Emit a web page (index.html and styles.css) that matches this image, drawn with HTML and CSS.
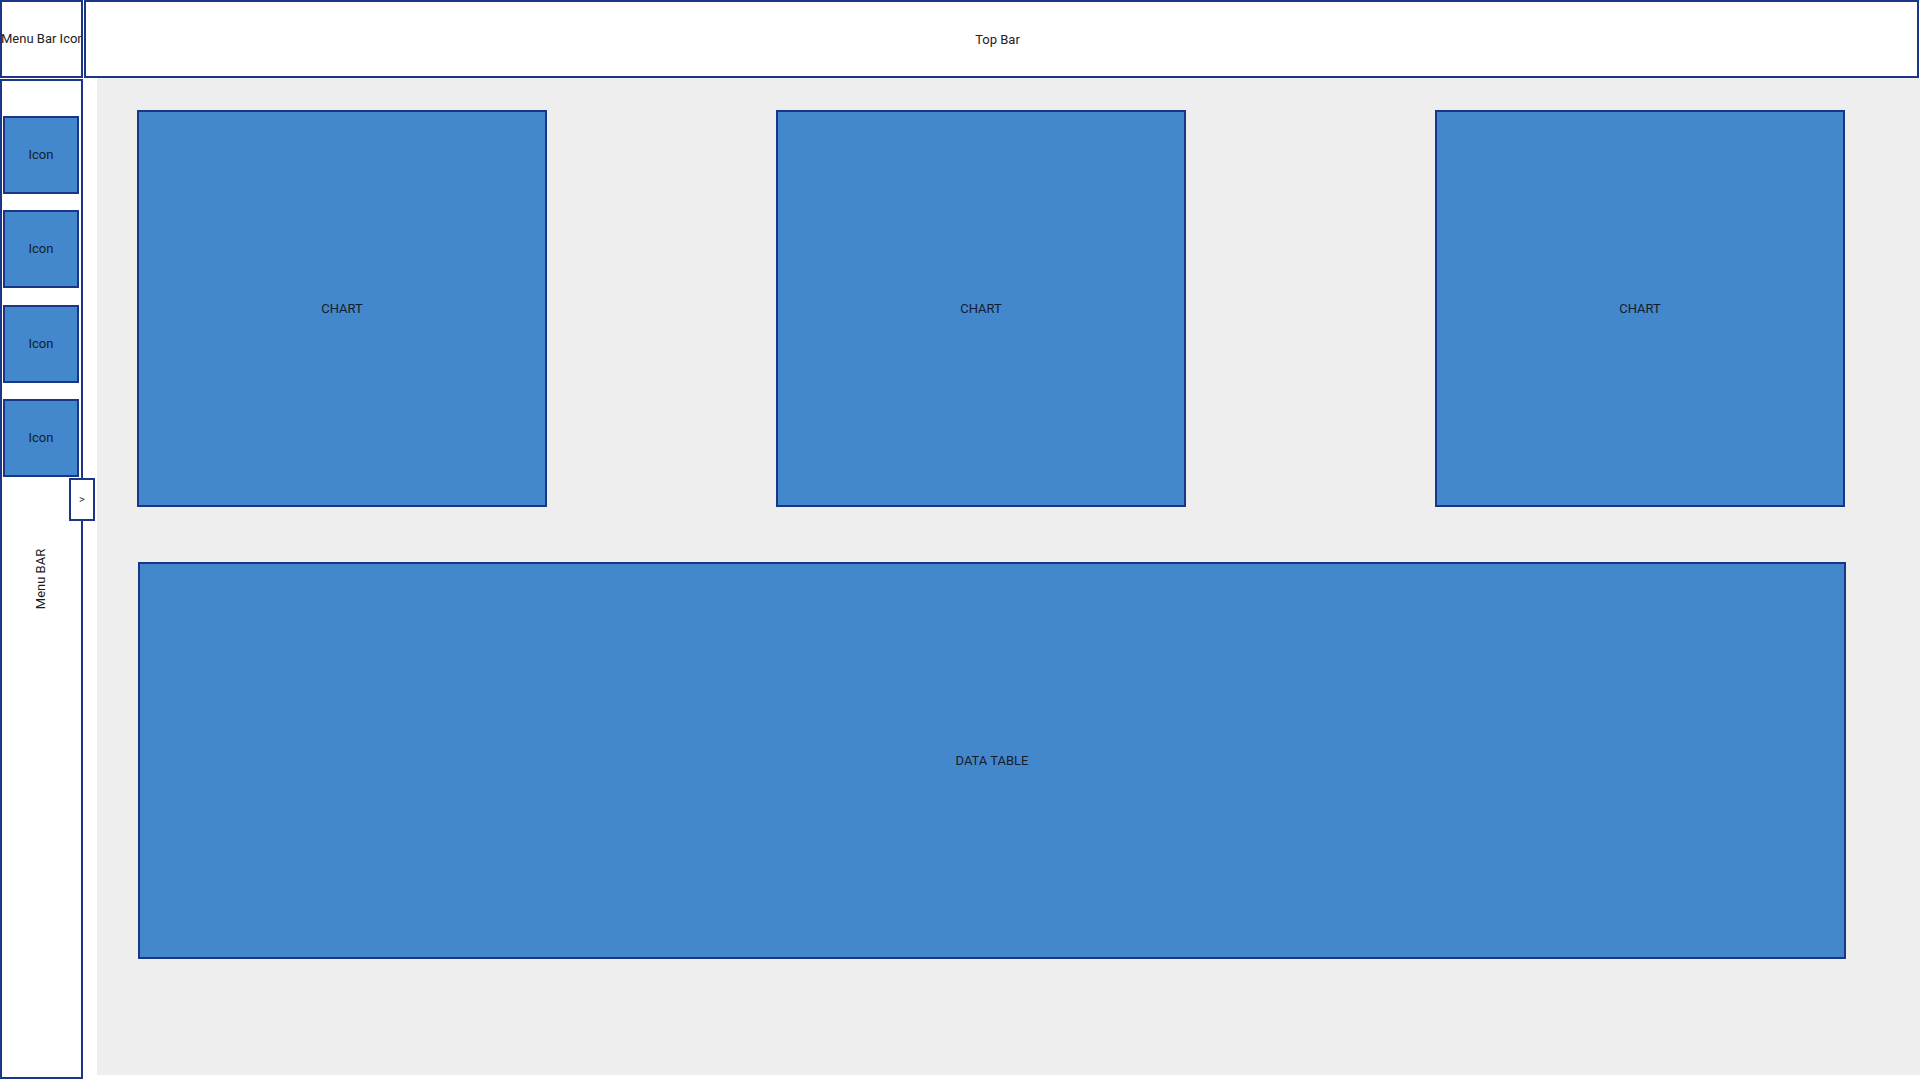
FILE: index.html
```html
<!DOCTYPE html>
<html lang="en">
<head>
<meta charset="utf-8">
<title>Dashboard Wireframe</title>
<link rel="stylesheet" href="styles.css">
</head>
<body>
<div class="page">
  <header class="header">
    <div class="menu-icon">Menu Bar Icon</div>
    <div class="top-bar">Top Bar</div>
  </header>
  <div class="body-row">
    <aside class="sidebar">
      <div class="icon">Icon</div>
      <div class="icon">Icon</div>
      <div class="icon">Icon</div>
      <div class="icon">Icon</div>
      <button class="toggle" type="button">&gt;</button>
      <div class="sidebar-label">Menu BAR</div>
    </aside>
    <main class="content">
      <div class="charts">
        <div class="panel chart chart-1">CHART</div>
        <div class="panel chart chart-2">CHART</div>
        <div class="panel chart chart-3">CHART</div>
      </div>
      <div class="panel table">DATA TABLE</div>
    </main>
  </div>
</div>
</body>
</html>
```

FILE: styles.css
```css
* {
  box-sizing: border-box;
}

html, body {
  margin: 0;
  padding: 0;
  background: #ffffff;
}

body {
  font-family: Roboto, "Liberation Sans", Arial, sans-serif;
  font-size: 13px;
  color: #222222;
}

.page {
  width: 1920px;
  height: 1080px;
  overflow: hidden;
}

.header {
  display: flex;
  height: 78px;
}

.menu-icon {
  width: 83px;
  height: 78px;
  border: 2px solid #1b3587;
  white-space: nowrap;
  overflow: hidden;
  text-align: center;
  text-indent: -1px;
  line-height: 74px;
  color: #222222;
}

.top-bar {
  margin-left: 1px;
  width: 1835px;
  height: 78px;
  border: 2px solid #1b3587;
  display: flex;
  align-items: center;
  justify-content: center;
  padding-right: 8px;
  color: #222222;
}

.body-row {
  display: flex;
  align-items: flex-start;
}

.sidebar {
  position: relative;
  margin-top: 1px;
  width: 83px;
  height: 1000px;
  border: 2px solid #1b3587;
  padding: 35px 2px 0 1px;
  display: flex;
  flex-direction: column;
  gap: 16.33px;
}

.icon {
  width: 76px;
  height: 78px;
  background: #4388cc;
  border: 2px solid #1b3587;
  display: flex;
  align-items: center;
  justify-content: center;
  padding-bottom: 1px;
  color: #141c2c;
}

.toggle {
  position: absolute;
  left: 67px;
  top: 397px;
  width: 26px;
  height: 43px;
  padding: 0;
  background: #ffffff;
  border: 2px solid #1b3587;
  font-family: Roboto, "Liberation Sans", Arial, sans-serif;
  font-size: 11px;
  color: #333333;
  display: flex;
  align-items: center;
  justify-content: center;
}

.sidebar-label {
  position: absolute;
  left: 38px;
  top: 498px;
  transform: translate(-50%, -50%) rotate(-90deg);
  white-space: nowrap;
  color: #1a1a1a;
}

.content {
  margin-left: 14px;
  width: 1823px;
  height: 997px;
  background: #eeeeee;
  padding: 32px 0 0 40px;
}

.charts {
  display: flex;
}

.panel {
  background: #4388cc;
  border: 2px solid #1b3587;
  display: flex;
  align-items: center;
  justify-content: center;
  color: #141c2c;
}

.chart {
  width: 410px;
  height: 397px;
}

.chart-2 {
  margin-left: 229px;
}

.chart-3 {
  margin-left: 249px;
}

.table {
  margin-top: 55px;
  margin-left: 1px;
  width: 1708px;
  height: 397px;
}
```
